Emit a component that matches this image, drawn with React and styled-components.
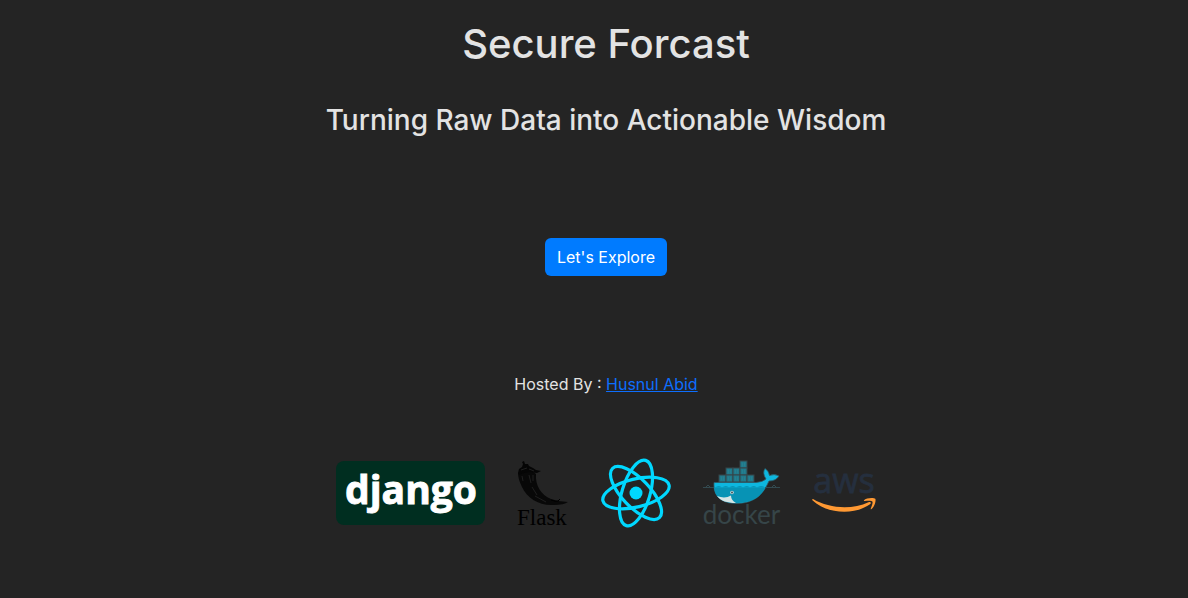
import React from "react";
import styled, { createGlobalStyle } from "styled-components";

const GlobalStyle = createGlobalStyle`
  *, *::before, *::after { box-sizing: border-box; }
  body {
    margin: 0;
    background: #242424;
    color: #e3e3e3;
    font-family: Inter, "Liberation Sans", sans-serif;
    font-size: 16px;
    line-height: 24px;
  }
`;

const Page = styled.main`
  display: flex;
  flex-direction: column;
  align-items: center;
  padding: 20px 0 68px 24px;
  text-align: center;
`;

const Title = styled.h1`
  margin: 0 0 36px;
  font-size: 40px;
  font-weight: 500;
  line-height: 48px;
`;

const Tagline = styled.h2`
  margin: 0 0 102px;
  font-size: 28px;
  font-weight: 500;
  line-height: 32px;
`;

const ExploreButton = styled.button`
  margin: 0 0 96px;
  padding: 7px 12px;
  border: 0;
  border-radius: 6px;
  background: #007bff;
  color: #fff;
  font: inherit;
  cursor: pointer;
`;

const Host = styled.p`
  margin: 0 0 60px;
`;

const HostLink = styled.a`
  color: #0d6efd;
  text-decoration: underline;
`;

const LogoRow = styled.ul`
  display: flex;
  flex-wrap: wrap;
  align-items: center;
  justify-content: center;
  gap: 32px;
  min-height: 74px;
  margin: 0;
  padding: 0;
  list-style: none;
`;

const LogoItem = styled.li`
  display: flex;
`;

const Mark = styled.svg`
  display: block;
  overflow: visible;
`;

const LogoText = styled.text`
  font-family: ${(p) => p.$family};
  font-size: ${(p) => p.$size}px;
  font-weight: ${(p) => p.$weight || 400};
`;

const DjangoLogo = () => (
  <Mark width="149" height="64" viewBox="0 0 149 64" role="img" aria-label="django">
    <rect width="149" height="64" rx="8" fill="#002e20" />
    <LogoText x="75" y="43" textAnchor="middle" fill="#fff" stroke="#fff" strokeWidth="0.9" $family='"Open Sans", sans-serif' $size={39} $weight={700}>
      django
    </LogoText>
  </Mark>
);

const FlaskLogo = () => (
  <Mark width="51" height="64" viewBox="0 0 51 64" role="img" aria-label="Flask">
    <path d="M1 12 C5 9 16 9 19 13 C18 24 24 34 34 38 Q42 41 51 41 Q47 44 37 44 C22 45 10 37 5 26 Q1 18 1 12Z" fill="#080808" />
    <path d="M1 12 L2 8 L5 6 L6 3 L5 1 L7 0 L8 3 L11 3 L12 5 L16 7 L19 9 L24 10 L20 12 L13 11 L7 12 L2 14Z" fill="#050505" />
    <path d="M12 14 L14 22 M16 14 L16 20 M15 26 L20 34 M5 15 L6 20 M18 35 L29 41 M4 9 L10 7 M12 8 L17 10" fill="none" stroke="#1f1f1f" strokeWidth="1" />
    <path d="M34 39 Q39 41 41 40 L43 38" fill="none" stroke="#000" strokeWidth="1" />
    <LogoText x="0" y="64" fill="#000" $family='"Liberation Serif", serif' $size={23}>
      Flask
    </LogoText>
  </Mark>
);

const ReactLogo = () => (
  <Mark width="71" height="71" viewBox="-36 -35 71 71" role="img" aria-label="React">
    <circle r="6.5" fill="#00d8ff" />
    <g fill="none" stroke="#00d8ff" strokeWidth="3.2" transform="rotate(-13.5)">
      <ellipse rx="34" ry="14" />
      <ellipse rx="34" ry="14" transform="rotate(60)" />
      <ellipse rx="34" ry="14" transform="rotate(120)" />
    </g>
  </Mark>
);

const containers = [
  [37, 0], [23, 7], [30, 7], [37, 7],
  [16, 14], [23, 14], [30, 14], [37, 14], [44, 14],
];

const DockerLogo = () => (
  <Mark width="77" height="64" viewBox="0 0 77 64" role="img" aria-label="docker">
    {containers.map(([x, y]) => (
      <g key={`${x}-${y}`}>
        <rect x={x} y={y} width="7" height="7" fill="#20798a" stroke="#364548" />
        <path d={`M${x + 2.5} ${y + 1.5}v4M${x + 4.5} ${y + 1.5}v4`} stroke="#2a8392" strokeWidth="0.7" />
      </g>
    ))}
    <path d="M11 21.5 H53 Q60 21 63 18 Q59 12 62 7.5 Q66 10 66.5 14.5 Q71 12.5 76 15 Q73 20 66 20 C60 34 51 42.5 33 42.5 C17 42.5 10 34 11 21.5Z" fill="#0db7df" stroke="#315762" strokeWidth="0.8" />
    <path d="M11 26.5 H62.5 C57 37 48 42 33 42 C18 42 12 36 11 26.5Z" fill="#0793b5" />
    <path d="M14 35 Q22 38 28 34.5 Q28 39 33 42 C24 42 18 40 14 35Z" fill="#d5e5e5" />
    <path d="M12 26.5 q4 -3 7 0 q4 -3 7 0 q4 -3 7 0 q4 -3 7 0 q4 -3 7 0 q4 -3 7 0 q4 -3 8 0" fill="#0793b5" />
    <path d="M0 26.5 H11 M62 26.5 H77 M3 26 l2 -2 2 2 M69 26 l2 -2 2 2" fill="none" stroke="#364f56" strokeWidth="0.9" />
    <circle cx="29" cy="31.5" r="1.8" fill="#c7dddf" />
    <circle cx="29" cy="31.5" r="0.9" fill="#30474f" />
    <LogoText x="38.5" y="63" textAnchor="middle" fill="#364548" $family="Lato, sans-serif" $size={26}>
      docker
    </LogoText>
  </Mark>
);

const AwsLogo = () => (
  <Mark width="64" height="38" viewBox="0 0 64 38" role="img" aria-label="aws">
    <LogoText x="32" y="19" textAnchor="middle" fill="#252f3e" stroke="#252f3e" strokeWidth="0.8" $family='"Open Sans", sans-serif' $size={34}>
      aws
    </LogoText>
    <path d="M1 25 C17 34.5 40 36 56.5 28.2 C58.5 27.4 59.7 29 58 30.3 C42 41.5 15 40 0.4 26.2 Q-0.2 24.8 1 25Z" fill="#f93" />
    <path d="M52 26.2 C54 23.8 62 23.4 63.3 24.8 C64.3 26.5 62.5 33 59.6 35 C58.8 35.5 58.4 35.1 58.8 34.4 C60 31.5 61.1 28.5 60.4 27.5 C59.7 26.5 56 26.7 52.8 27 Q51.3 27.1 52 26.2Z" fill="#f93" />
  </Mark>
);

const logos = [DjangoLogo, FlaskLogo, ReactLogo, DockerLogo, AwsLogo];

export default function App() {
  return (
    <>
      <GlobalStyle />
      <Page>
        <Title>Secure Forcast</Title>
        <Tagline>Turning Raw Data into Actionable Wisdom</Tagline>
        <ExploreButton type="button">Let's Explore</ExploreButton>
        <Host>
          Hosted By : <HostLink href="#host">Husnul Abid</HostLink>
        </Host>
        <LogoRow>
          {logos.map((Logo, i) => (
            <LogoItem key={i}>
              <Logo />
            </LogoItem>
          ))}
        </LogoRow>
      </Page>
    </>
  );
}
